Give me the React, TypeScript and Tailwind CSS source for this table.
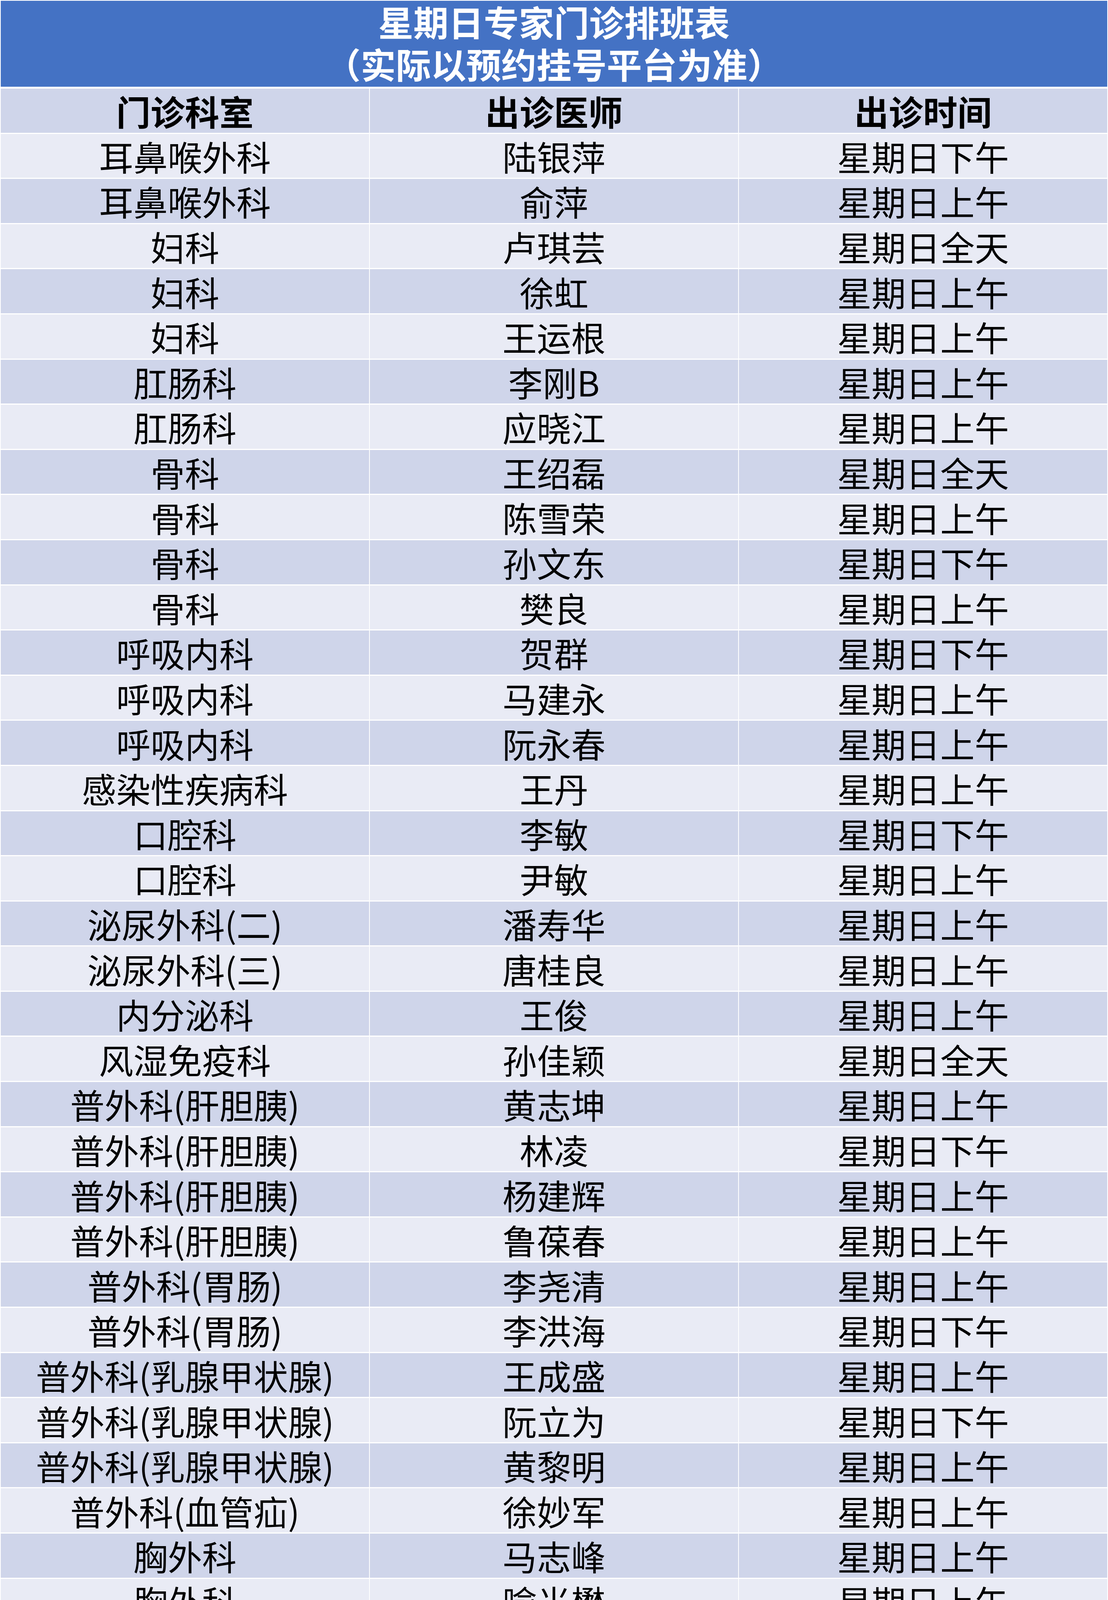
import React from 'react';

type Row = [string, string, string];

const rows: Row[] = [
    ['耳鼻喉外科', '陆银萍', '星期日下午'],
    ['耳鼻喉外科', '俞萍', '星期日上午'],
    ['妇科', '卢琪芸', '星期日全天'],
    ['妇科', '徐虹', '星期日上午'],
    ['妇科', '王运根', '星期日上午'],
    ['肛肠科', '李刚B', '星期日上午'],
    ['肛肠科', '应晓江', '星期日上午'],
    ['骨科', '王绍磊', '星期日全天'],
    ['骨科', '陈雪荣', '星期日上午'],
    ['骨科', '孙文东', '星期日下午'],
    ['骨科', '樊良', '星期日上午'],
    ['呼吸内科', '贺群', '星期日下午'],
    ['呼吸内科', '马建永', '星期日上午'],
    ['呼吸内科', '阮永春', '星期日上午'],
    ['感染性疾病科', '王丹', '星期日上午'],
    ['口腔科', '李敏', '星期日下午'],
    ['口腔科', '尹敏', '星期日上午'],
    ['泌尿外科(二)', '潘寿华', '星期日上午'],
    ['泌尿外科(三)', '唐桂良', '星期日上午'],
    ['内分泌科', '王俊', '星期日上午'],
    ['风湿免疫科', '孙佳颖', '星期日全天'],
    ['普外科(肝胆胰)', '黄志坤', '星期日上午'],
    ['普外科(肝胆胰)', '林凌', '星期日下午'],
    ['普外科(肝胆胰)', '杨建辉', '星期日上午'],
    ['普外科(肝胆胰)', '鲁葆春', '星期日上午'],
    ['普外科(胃肠)', '李尧清', '星期日上午'],
    ['普外科(胃肠)', '李洪海', '星期日下午'],
    ['普外科(乳腺甲状腺)', '王成盛', '星期日上午'],
    ['普外科(乳腺甲状腺)', '阮立为', '星期日下午'],
    ['普外科(乳腺甲状腺)', '黄黎明', '星期日上午'],
    ['普外科(血管疝)', '徐妙军', '星期日上午'],
    ['胸外科', '马志峰', '星期日上午'],
    ['胸外科', '喻光懋', '星期日上午'],
    ['神经内科', '钟洁静', '星期日上午'],
    ['神经内科', '赵宏军', '星期日下午'],
    ['神经内科', '钟芳芳', '星期日下午'],
    ['神经内科', '魏博', '星期日下午'],
    ['神经外科', '王晓明', '星期日下午'],
    ['神经外科', '俞学斌', '星期日上午'],
    ['神经外科', '包庆泉', '星期日上午'],
    ['肾内科', '谢海英', '星期日上午'],
    ['肿瘤内科', '赵建国', '星期日上午'],
    ['放疗科', '徐俊', '星期日上午'],
    ['消化内科', '潘颖颖', '星期日上午'],
    ['小儿内科', '姚欢迎', '星期日上午'],
    ['小儿内科', '邵晓丽', '星期日上午'],
    ['小儿内科', '胡淑英', '星期日下午'],
    ['心血管内科', '彭放', '星期日上午'],
    ['心血管内科', '徐步云', '星期日下午'],
    ['血液内科', '洪攀', '星期日下午'],
    ['血液内科', '封蔚莹', '星期日上午'],
    ['中医科', '徐晓晏', '星期日全天'],
    ['超声科（心血管）', '诸磊', '星期日上午'],
    ['超声科（乳腺甲状腺）', '李星云', '星期日上午'],
    ['超声科（腹部）', '孙建明', '星期日上午'],
    ['放射科', '倪瑞军', '星期日全天'],
    ['心理健康门诊', '叶兰英', '星期日下午'],
];

const font = { fontFamily: '"Noto Sans CJK SC", "Noto Sans", sans-serif' };

// one table cell; header row uses bold, rows alternate light / darker band
function Cell({ text, bold, dark }: { text: string; bold?: boolean; dark: boolean }) {
    return (
        <div
            className={`flex h-[112.6px] items-center justify-center whitespace-nowrap text-[88px] leading-none text-black ${
                bold ? 'font-bold' : 'font-normal'
            } ${dark ? 'bg-[#CFD5EA]' : 'bg-[#E9EBF5]'}`}
        >
            {text}
        </div>
    );
}

export default function App() {
    return (
        <div className="w-[2837px] h-[6934px] overflow-hidden bg-white px-[2px] pt-[2px]" style={font}>
            <div className="flex h-[220px] flex-col items-center justify-center bg-[#4472C4] pb-[8px] text-[90px] font-bold leading-[108px] text-white">
                <div>星期日专家门诊排班表</div>
                <div>（实际以预约挂号平台为准）</div>
            </div>

            <div className="mt-[5px] grid grid-cols-3 gap-x-[2px] gap-y-[3px]">
                <Cell text="门诊科室" bold dark />
                <Cell text="出诊医师" bold dark />
                <Cell text="出诊时间" bold dark />
                {rows.map((r, i) => (
                    <React.Fragment key={i}>
                        <Cell text={r[0]} dark={i % 2 === 1} />
                        <Cell text={r[1]} dark={i % 2 === 1} />
                        <Cell text={r[2]} dark={i % 2 === 1} />
                    </React.Fragment>
                ))}
            </div>
        </div>
    );
}
